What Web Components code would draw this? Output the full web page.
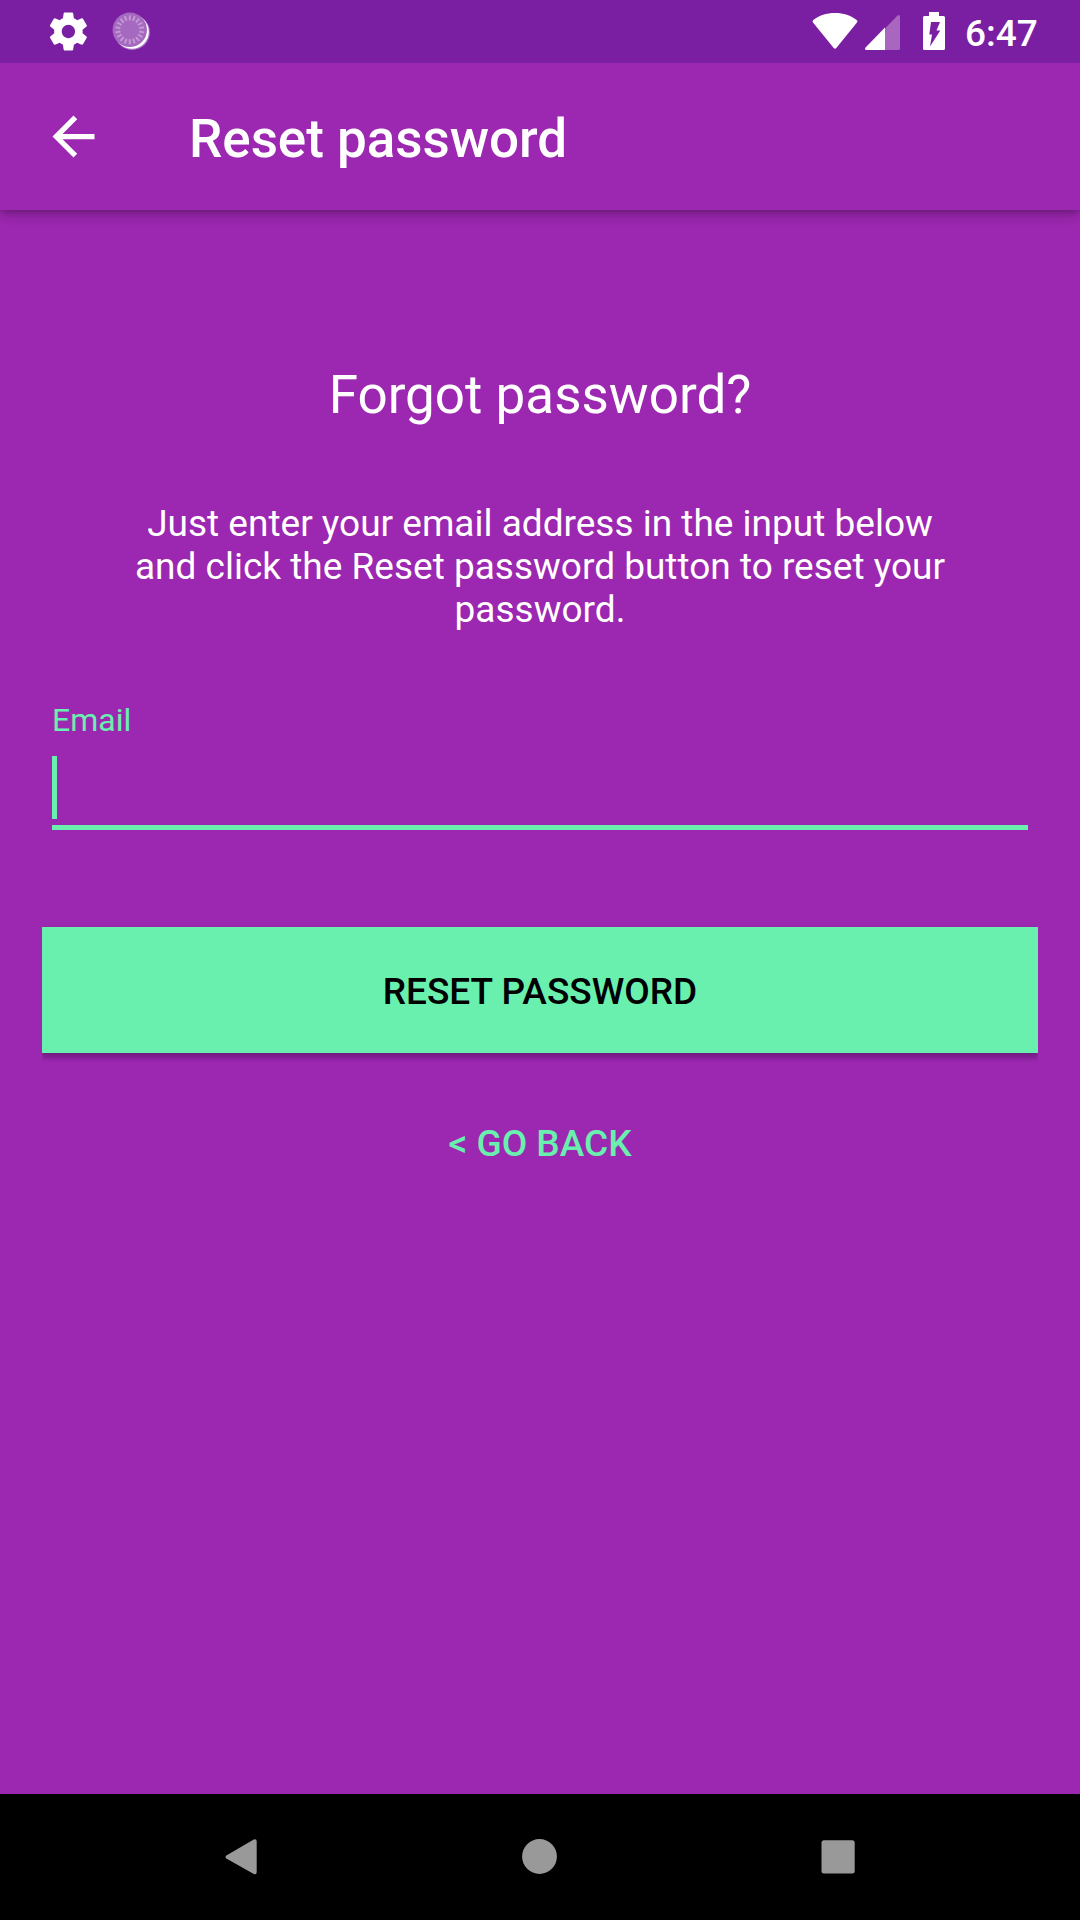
<!DOCTYPE html>
<html lang="en">
<head>
<meta charset="utf-8">
<title>Reset password</title>
<style>
html,body{margin:0;padding:0}
body{width:1080px;height:1920px;overflow:hidden;background:#9c27b0;font-family:Roboto,sans-serif;color:#fff}
</style>
</head>
<body>
<reset-screen></reset-screen>
<script>
const define = (name, html) => {
  const t = document.createElement('template');
  t.innerHTML = html;
  customElements.define(name, class extends HTMLElement {
    constructor() {
      super();
      this.attachShadow({ mode: 'open' }).append(t.content.cloneNode(true));
    }
  });
};

const ticks = Array.from({ length: 18 }, (_, i) =>
  `<path d="M0 -14.500v5" transform="rotate(${i * 20})"/>`).join('');

define('status-bar', `
<style>
:host{display:flex;height:63px;background:#7b1fa2;justify-content:space-between;flex:none}
svg{display:block}
.side{display:flex}
.left{padding-left:40px}
time{font-size:37px;font-weight:500;line-height:67px;width:75px;white-space:nowrap;padding-right:40px}
</style>
<div class="side left">
<svg width="120" height="63" viewBox="40 0 120 63">
<path fill="#fff" transform="translate(45.6 8.7) scale(1.9)" d="M19.43 12.98c.04-.32.07-.64.07-.98s-.03-.66-.07-.98l2.11-1.65c.19-.15.24-.42.12-.64l-2-3.46c-.12-.22-.39-.3-.61-.22l-2.49 1c-.52-.4-1.08-.73-1.69-.98l-.38-2.65C14.46 2.18 14.25 2 14 2h-4c-.25 0-.46.18-.49.42l-.38 2.65c-.61.25-1.17.59-1.69.98l-2.49-1c-.23-.09-.49 0-.61.22l-2 3.46c-.13.22-.07.49.12.64l2.11 1.65c-.04.32-.07.65-.07.98s.03.66.07.98l-2.11 1.65c-.19.15-.24.42-.12.64l2 3.46c.12.22.39.3.61.22l2.49-1c.52.4 1.08.73 1.69.98l.38 2.65c.03.24.24.42.49.42h4c.25 0 .46-.18.49-.42l.38-2.65c.61-.25 1.17-.59 1.69-.98l2.49 1c.23.09.49 0 .61-.22l2-3.46c.12-.22.07-.49-.12-.64l-2.11-1.65zM12 15.5c-1.93 0-3.5-1.57-3.5-3.5s1.57-3.500 3.500-3.500 3.500 1.570 3.500 3.500-1.570 3.500-3.500 3.500z"/>
<circle cx="132.200" cy="32.200" r="17.700" fill="#fff" opacity=".4"/>
<circle cx="131.800" cy="31.800" r="17" fill="#fff"/>
<circle cx="129.800" cy="29.800" r="17.200" fill="#a569bf"/>
<g transform="translate(129.800 29.800)" stroke="#c49bd4" stroke-width="1.900">${ticks}</g>
</svg>
</div>
<div class="side">
<svg width="154" height="63" viewBox="811 0 154 63">
<path fill="#fff" d="M813 22.6q-1.2-1.4.3-2.5C819 15.500 826.500 13 835 13s16 2.500 21.700 7.100q1.500 1.100.3 2.500L836.300 48q-1.300 1.500-2.600 0Z"/>
<path fill="#a866bf" d="M885 28.500 897.300 15.700Q900 14 900 17V48.500Q900 50 898.500 50H885Z"/>
<path fill="#fff" d="M885 27.500V50H866.500Q864 49.500 865.600 47.500Z"/>
<path fill="#fff" fill-rule="evenodd" d="M929 12h10v4h4.500q1.500 0 1.500 1.500v31q0 1.500-1.500 1.500h-19q-1.500 0-1.500-1.500v-31q0-1.500 1.500-1.500h4.500ZM931 22 929.300 34.500H932L930 46.500 940.300 30.500H936.500L940 22Z"/>
</svg>
<time>6:47</time>
</div>`);

define('app-bar', `
<style>
:host{display:flex;height:147px;flex:none;align-items:flex-start;background:#9c27b0;box-shadow:0 5px 11px -1px rgba(0,0,0,.3),0 1px 3px rgba(0,0,0,.1);box-sizing:border-box;padding-left:42px;clip-path:inset(0 0 -30px)}
svg{display:block;margin:42px 84px 0 0}
h1{margin:42px 0 0;font-size:53px;font-weight:500;line-height:68px;letter-spacing:-.05px;white-space:nowrap}
</style>
<svg width="63" height="63" viewBox="0 0 24 24"><path fill="#fff" d="M20 11H7.830l5.590-5.590L12 4l-8 8 8 8 1.410-1.410L7.830 13H20v-2z"/></svg>
<h1><slot></slot></h1>`);

define('text-field', `
<style>
:host{display:block;width:976px;height:129px;color:#69f0ae}
label{display:block;font-size:32px;line-height:38px;height:55px}
.box{height:68.500px}
i{display:block;width:5px;height:63px;background:#69f0ae}
.line{height:5.300px;background:#69f0ae}
</style>
<label><slot></slot></label>
<div class="box"><i></i></div>
<div class="line"></div>`);

define('raised-button', `
<style>
:host{display:block;width:996px;height:126px;clip-path:inset(-6px 0 -16px)}
button{display:block;width:100%;height:100%;border:0;padding:3px 0 0;background:#69f0ae;color:#000;font:500 37px/43px Roboto,sans-serif;text-transform:uppercase;box-shadow:0 5px 5px rgba(0,0,0,.23),0 1px 7px rgba(0,0,0,.08)}
</style>
<button><slot></slot></button>`);

define('flat-button', `
<style>
:host{display:block}
button{display:block;border:0;padding:0;background:none;color:#69f0ae;font:500 37px/43px Roboto,sans-serif;text-transform:uppercase;white-space:nowrap}
</style>
<button><slot></slot></button>`);

define('nav-bar', `
<style>
:host{display:flex;height:126px;flex:none;background:#000;justify-content:space-between;align-items:center;padding:0 209px;box-sizing:border-box}
svg{display:block;width:64px;height:64px;fill:#999}
</style>
<svg viewBox="209 1825 64 64"><path d="M226.300 1858.500q-1.600-1.500 0-3L253.800 1839.500q2.900-1 2.900 2V1872q0 3-2.900 2Z"/></svg>
<svg viewBox="508 1825 64 64"><circle cx="539.500" cy="1856.500" r="17.400"/></svg>
<svg viewBox="807 1825 64 64"><rect x="821.500" y="1840.300" width="33.200" height="33.200" rx="2.500"/></svg>`);

define('reset-screen', `
<style>
:host{display:flex;flex-direction:column;width:1080px;height:1920px;background:#9c27b0}
main{flex:1;display:flex;flex-direction:column;align-items:center}
h2{margin:155px 0 0;font-size:53px;font-weight:400;line-height:60px;white-space:nowrap}
p{margin:77px 0 0;font-size:37px;line-height:43px;text-align:center;white-space:nowrap}
text-field{margin-top:70px}
raised-button{margin-top:97px}
flat-button{margin-top:69px}
</style>
<status-bar></status-bar>
<app-bar>Reset password</app-bar>
<main>
<h2>Forgot password?</h2>
<p>Just enter your email address in the input below<br>and click the Reset password button to reset your<br>password.</p>
<text-field>Email</text-field>
<raised-button>Reset password</raised-button>
<flat-button>&lt; Go back</flat-button>
</main>
<nav-bar></nav-bar>`);
</script>
</body>
</html>
